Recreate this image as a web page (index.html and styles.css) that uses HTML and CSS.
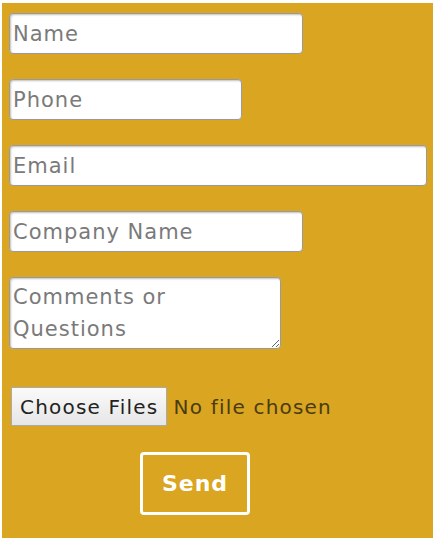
FILE: index.html
```html
<!DOCTYPE html>
<html lang="en">
<head>
    <meta charset="UTF-8">
    <meta name="viewport" content="width=device-width, initial-scale=1.0">
    <title>Contact</title>
    <link rel="stylesheet" href="styles.css">
</head>
<body>
    <form class="contact-form">
        <input class="field field-name" type="text" placeholder="Name">
        <input class="field field-phone" type="tel" placeholder="Phone">
        <input class="field field-email" type="email" placeholder="Email">
        <input class="field field-company" type="text" placeholder="Company Name">
        <textarea class="field field-comments" placeholder="Comments or Questions"></textarea>
        <input class="files" type="file" multiple>
        <button class="send" type="button">Send</button>
    </form>
</body>
</html>
```
FILE: styles.css
```css
:root {
    --gold: #DAA520;
    --field-border: #9a9a9a;
    --placeholder: #7a7a7a;
}
html, body {
    overflow: hidden;
}
body {
    margin: 0;
    background: #fff;
    font-family: "DejaVu Sans", sans-serif;
}
.contact-form {
    background: var(--gold);
    margin: 3px 4px 0 2px;
    height: 535px;
    padding: 10px 0 0 7px;
    box-sizing: border-box;
    display: flex;
    flex-direction: column;
    align-items: flex-start;
    overflow: hidden;
}
.field {
    box-sizing: border-box;
    height: 41px;
    margin: 0 0 25px;
    padding: 2px 3px;
    border: 1px solid var(--field-border);
    border-radius: 4px;
    background: #fff;
    font-family: inherit;
    font-size: 21px;
    letter-spacing: 1px;
    color: #333;
    box-shadow: inset 1px 1px 2px rgba(0, 0, 0, 0.25);
}
.field::placeholder {
    color: var(--placeholder);
}
.field-name { width: 294px; }
.field-phone { width: 233px; }
.field-email { width: 418px; }
.field-company { width: 294px; }
.field-comments {
    width: 272px;
    height: 72px;
    margin-bottom: 38px;
    line-height: 32px;
    padding: 3px 3px 0;
    resize: both;
}
.files {
    font-family: inherit;
    font-size: 20px;
    letter-spacing: 1.2px;
    color: #4a3c10;
    margin-left: 2px;
}
.files::file-selector-button {
    font-family: inherit;
    font-size: 20px;
    letter-spacing: 1.2px;
    height: 39px;
    padding: 0 8px;
    margin-right: 6px;
    color: #222;
    background: linear-gradient(#fafafa, #e6e6e6);
    border: 1px solid #aaa;
    border-radius: 0;
}
.send {
    margin: 26px 0 0 131px;
    width: 110px;
    height: 63px;
    background: transparent;
    border: 3px solid #fff;
    border-radius: 4px;
    color: #fff;
    font-family: inherit;
    font-weight: bold;
    font-size: 22px;
    letter-spacing: 1px;
}
```
